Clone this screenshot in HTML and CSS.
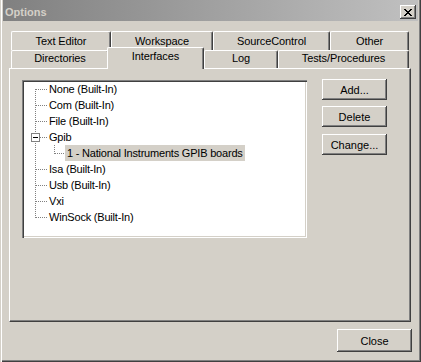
FILE: index.html
```html
<!DOCTYPE html>
<html lang="en">
<head>
	<title>Options</title>
	<link rel="stylesheet" href="styles.css">
</head>
<body>
<div class="window">
	<div class="titlebar">
		<span class="title">Options</span>
		<span class="close-x">
			<svg width="8" height="7" viewBox="0 0 8 7" shape-rendering="crispEdges"><path fill="#000" d="M0 0h2v1h-2z M6 0h2v1h-2z M1 1h2v1h-2z M5 1h2v1h-2z M2 2h4v1h-4z M3 3h2v1h-2z M2 4h4v1h-4z M1 5h2v1h-2z M5 5h2v1h-2z M0 6h2v1h-2z M6 6h2v1h-2z"/></svg>
		</span>
	</div>

	<div class="tabs tabs-back">
		<div class="tab t-editor">Text Editor</div>
		<div class="tab t-workspace">Workspace</div>
		<div class="tab t-source">SourceControl</div>
		<div class="tab t-other">Other</div>
	</div>
	<div class="tabs tabs-front">
		<div class="tab t-dirs">Directories</div>
		<div class="tab t-interfaces active">Interfaces</div>
		<div class="tab t-log">Log</div>
		<div class="tab t-tests">Tests/Procedures</div>
	</div>

	<div class="panel">
		<div class="tree">
			<div class="row first"><span class="stem"></span><span class="label">None (Built-In)</span></div>
			<div class="row"><span class="stem"></span><span class="label">Com (Built-In)</span></div>
			<div class="row"><span class="stem"></span><span class="label">File (Built-In)</span></div>
			<div class="row"><span class="stem open"><span class="expander"></span></span><span class="label">Gpib</span></div>
			<div class="row"><span class="stem child"></span><span class="label selected">1 - National Instruments GPIB boards</span></div>
			<div class="row"><span class="stem"></span><span class="label">Isa (Built-In)</span></div>
			<div class="row"><span class="stem"></span><span class="label">Usb (Built-In)</span></div>
			<div class="row"><span class="stem"></span><span class="label">Vxi</span></div>
			<div class="row last"><span class="stem"></span><span class="label">WinSock (Built-In)</span></div>
		</div>
		<div class="side-buttons">
			<button class="btn">Add...</button>
			<button class="btn">Delete</button>
			<button class="btn btn-change">Change...</button>
		</div>
	</div>

	<div class="footer">
		<button class="btn btn-close">Close</button>
	</div>
</div>
</body>
</html>
```

FILE: styles.css
```css
body{
	margin: 0;
	background: #d4d0c8;
	font-family: "Liberation Sans", Arial, sans-serif;
	font-size: 11px;
	color: #000;
}
.window{
	box-sizing: border-box;
	width: 421px;
	height: 362px;
	padding: 0 3px 3px 3px;
	background: #d4d0c8;
	box-shadow: inset 1px 0 #d4d0c8, inset 2px 0 #fff, inset -1px -1px #404040, inset -2px -2px #808080;
}
.titlebar{
	display: flex;
	justify-content: space-between;
	align-items: flex-start;
	height: 21px;
	padding: 0 2px 0 2px;
	background: linear-gradient(to right, #808080, #c0c0c0);
}
.title{
	margin-top: 5px;
	line-height: 14px;
	font-weight: bold;
	color: #d4d0c8;
}
.close-x{
	box-sizing: border-box;
	display: flex;
	align-items: center;
	justify-content: center;
	width: 16px;
	height: 14px;
	margin-top: 5px;
	background: #d4d0c8;
	box-shadow: inset -1px -1px #404040, inset 1px 1px #fff, inset -2px -2px #808080;
}

/* tabs */
.tabs{
	display: flex;
	margin-left: 8px;
}
.tabs-back{
	margin-top: 10px;
	height: 19px;
}
.tabs-front{
	height: 18px;
	align-items: flex-end;
}
.tab{
	box-sizing: border-box;
	flex: none;
	text-align: center;
	background: #d4d0c8;
	border-top: 1px solid #fff;
	border-left: 1px solid #fff;
	border-right: 1px solid #404040;
	border-radius: 2px 2px 0 0;
	box-shadow: inset -1px 0 #808080;
	letter-spacing: -0.1px;
}
.tabs-back .tab{
	height: 19px;
	line-height: 18px;
}
.tabs-front .tab{
	height: 18px;
	line-height: 15px;
}
.tabs-front .tab.active{
	position: relative;
	z-index: 1;
	height: 22px;
	line-height: 16px;
	margin-left: -2px;
	margin-bottom: -1px;
}
.t-editor{ width: 100px; }
.t-workspace{ width: 102px; }
.t-source{ width: 117px; }
.t-other{ width: 79px; }
.t-dirs{ width: 98px; }
.t-interfaces{ width: 97px; }
.t-log{ width: 74px; }
.t-tests{ width: 131px; }

/* panel */
.panel{
	box-sizing: border-box;
	display: flex;
	align-items: flex-start;
	height: 254px;
	margin: 0 7px 0 6px;
	padding: 11px 0 0 12px;
	border-top: 1px solid #fff;
	border-left: 1px solid #fff;
	border-right: 1px solid #404040;
	border-bottom: 1px solid #404040;
	box-shadow: inset -1px -1px #808080;
}
.tree{
	box-sizing: border-box;
	width: 285px;
	height: 158px;
	padding: 1px 0 0 2px;
	background: #fff;
	box-shadow: inset 1px 1px #808080, inset 2px 2px #404040, inset -1px -1px #fff, inset -2px -2px #d4d0c8;
}
.row{
	display: flex;
	height: 16px;
	line-height: 16px;
	white-space: nowrap;
}
.stem{
	flex: none;
	display: flex;
	align-items: center;
	width: 24px;
	height: 16px;
	background-image:
		repeating-linear-gradient(to bottom, #808080 0 1px, transparent 1px 2px),
		repeating-linear-gradient(to right, #808080 0 1px, transparent 1px 2px);
	background-repeat: no-repeat;
	background-size: 1px 16px, 11px 1px;
	background-position: 11px 0, 12px 8px;
}
.first .stem{
	background-size: 1px 8px, 11px 1px;
	background-position: 11px 8px, 12px 8px;
}
.last .stem{
	background-size: 1px 9px, 11px 1px;
	background-position: 11px 0, 12px 8px;
}
.stem.open{
	padding-left: 7px;
	box-sizing: border-box;
	background-size: 1px 16px, 7px 1px;
	background-position: 11px 0, 16px 8px;
}
.expander{
	box-sizing: border-box;
	width: 9px;
	height: 9px;
	border: 1px solid #808080;
	background: linear-gradient(#000, #000) center / 5px 1px no-repeat, #fff;
}
.stem.child{
	width: 41px;
	background-image:
		repeating-linear-gradient(to bottom, #808080 0 1px, transparent 1px 2px),
		repeating-linear-gradient(to bottom, #808080 0 1px, transparent 1px 2px),
		repeating-linear-gradient(to right, #808080 0 1px, transparent 1px 2px);
	background-size: 1px 16px, 1px 9px, 9px 1px;
	background-position: 11px 0, 30px 0, 31px 8px;
}
.label{
	padding: 0 1px;
	letter-spacing: -0.2px;
}
.label.selected{
	padding: 0 2px;
	background: #d4d0c8;
}

/* buttons */
.side-buttons{
	display: flex;
	flex-direction: column;
	gap: 6px;
	margin: -1px 0 0 15px;
}
.btn{
	box-sizing: border-box;
	width: 65px;
	height: 21px;
	padding: 0;
	border: none;
	background: #d4d0c8;
	font-family: "Liberation Sans", Arial, sans-serif;
	font-size: 11px;
	color: #000;
	box-shadow: inset -1px -1px #404040, inset 1px 1px #fff, inset -2px -2px #808080, inset 2px 2px #d4d0c8;
}
.btn-change{
	margin-top: 1px;
}
.footer{
	display: flex;
	justify-content: flex-end;
	padding: 7px 6px 0 0;
}
.btn-close{
	width: 75px;
	height: 23px;
}
```
